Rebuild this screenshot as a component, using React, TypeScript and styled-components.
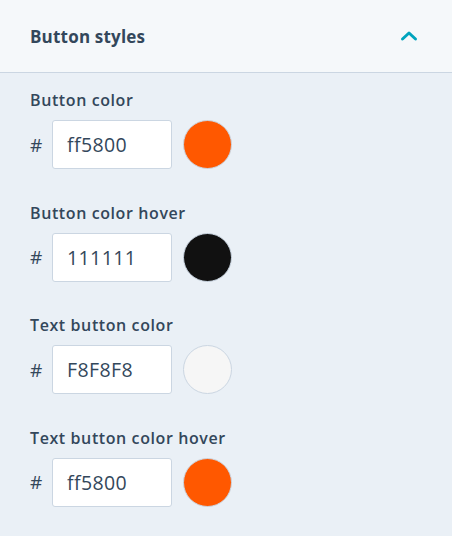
import styled, { createGlobalStyle } from 'styled-components'

const GlobalStyle = createGlobalStyle`
  html, body {
    margin: 0;
    padding: 0;
    background: #eaf0f6;
    font-family: 'Open Sans', 'Liberation Sans', sans-serif;
    color: #33475b;
  }
`

const fields = [
  { label: 'Button color', value: 'ff5800', swatch: '#ff5800' },
  { label: 'Button color hover', value: '111111', swatch: '#111111' },
  { label: 'Text button color', value: 'F8F8F8', swatch: '#f6f6f6' },
  { label: 'Text button color hover', value: 'ff5800', swatch: '#ff5800' },
]

function App() {
  return (
    <Panel>
      <GlobalStyle />
      <Header>
        <Title>Button styles</Title>
        <svg width='18' height='12' viewBox='0 0 18 12'>
          <path
            d='M2.5 9 L9 3 L15.5 9'
            fill='none'
            stroke='#00a4bd'
            strokeWidth='3'
            strokeLinecap='round'
            strokeLinejoin='round'
          />
        </svg>
      </Header>
      <Body>
        {fields.map((f) => (
          <Field key={f.label}>
            <Label>{f.label}</Label>
            <Row>
              <Hash>#</Hash>
              <HexInput defaultValue={f.value} />
              <Swatch $color={f.swatch} />
            </Row>
          </Field>
        ))}
      </Body>
    </Panel>
  )
}

const Panel = styled.div`
  width: 452px;
  min-height: 536px;
  background: #eaf0f6;
`

const Header = styled.div`
  height: 73px;
  box-sizing: border-box;
  padding: 0 34px 0 30px;
  display: flex;
  align-items: center;
  justify-content: space-between;
  background: #f5f8fa;
  border-bottom: 1px solid #cbd6e2;
`

const Title = styled.div`
  font-size: 17px;
  font-weight: 700;
  letter-spacing: 0.2px;
  color: #33475b;
`

const Body = styled.div`
  padding: 17px 0 0 30px;
  display: flex;
  flex-direction: column;
  gap: 33.5px;
`

const Field = styled.div`
  display: flex;
  flex-direction: column;
  gap: 10px;
`

const Label = styled.div`
  font-size: 16px;
  line-height: 20px;
  font-weight: 600;
  letter-spacing: 0.6px;
  color: #33475b;
`

const Row = styled.div`
  display: flex;
  align-items: center;
  gap: 11px;
`

const Hash = styled.span`
  width: 11px;
  font-size: 19px;
  color: #33475b;
`

const HexInput = styled.input`
  width: 120px;
  height: 49px;
  box-sizing: border-box;
  padding: 0 0 0 14px;
  border: 1px solid #cbd6e2;
  border-radius: 3px;
  background: #fff;
  font-family: 'Open Sans', 'Liberation Sans', sans-serif;
  font-size: 19.5px;
  letter-spacing: 0.4px;
  color: #33475b;
  outline: none;
`

const Swatch = styled.div<{ $color: string }>`
  width: 49px;
  height: 49px;
  box-sizing: border-box;
  border-radius: 50%;
  background: ${(p) => p.$color};
  border: 1px solid #cbd6e2;
`

export default App
